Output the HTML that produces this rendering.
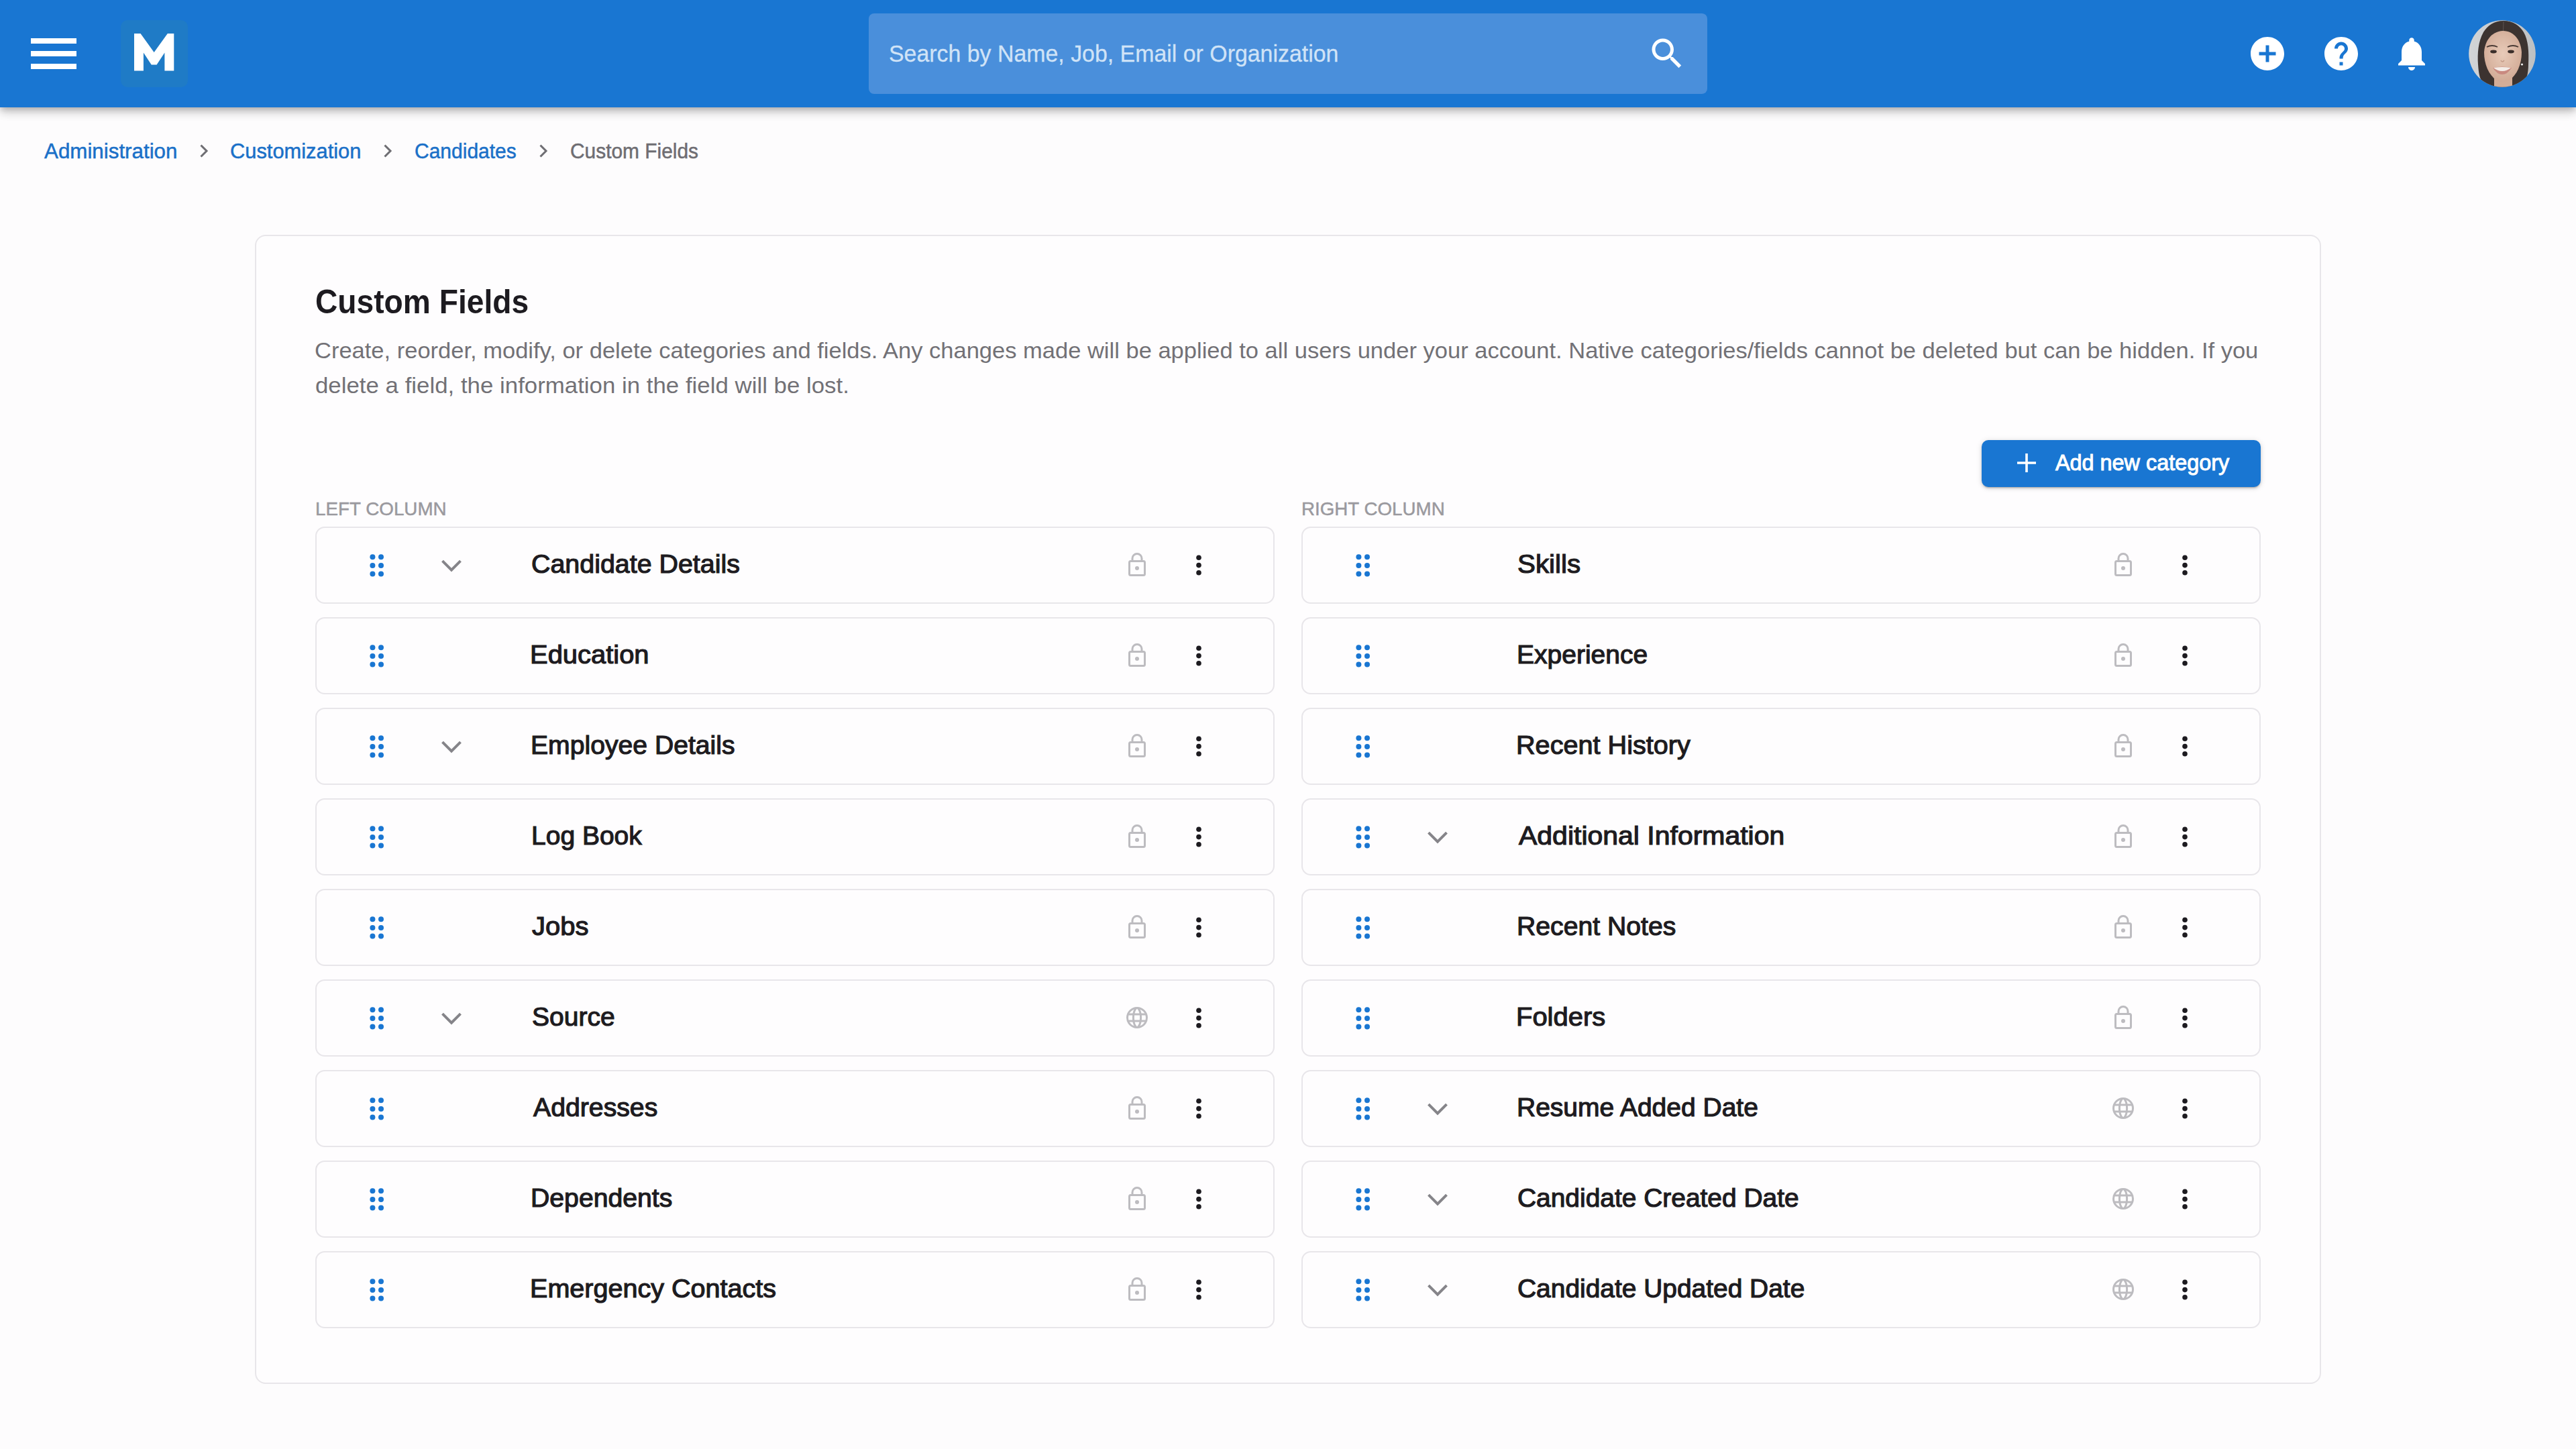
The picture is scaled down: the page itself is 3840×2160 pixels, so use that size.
<!DOCTYPE html>
<html><head><meta charset="utf-8"><style>
*{box-sizing:border-box;margin:0;padding:0}
html,body{width:3840px;height:2160px;overflow:hidden}
body{background:#fdfcfd;font-family:"Liberation Sans",sans-serif;position:relative}
.abs{position:absolute}
#hdr{position:absolute;left:0;top:0;width:3840px;height:160px;background:#1976d2;box-shadow:0 4px 8px -2px rgba(0,0,0,.16),0 8px 12px 0 rgba(0,0,0,.14),0 2px 20px 0 rgba(0,0,0,.12);z-index:2}
.bar{position:absolute;left:46px;width:68px;height:8px;background:#fff}
#logo{position:absolute;left:180px;top:30px;width:100px;height:100px;border-radius:10px;background:#1f7bc6}
#search{position:absolute;left:1295px;top:20px;width:1250px;height:120px;border-radius:8px;background:#4a8fdb}
.t{position:absolute;white-space:nowrap;line-height:1;transform-origin:0 0}
#card{position:absolute;left:380px;top:350px;width:3080px;height:1713px;border:2px solid #e8e6ea;border-radius:16px;background:#fefdfe}
.row{position:absolute;width:1430px;height:115px;border:2px solid #e8e6ea;border-radius:14px;background:#fefdfe}
svg{position:absolute;overflow:visible}
@media (max-width:1920px){html{zoom:0.5}}
</style></head><body>
<div id="hdr">
<div class="bar" style="top:57px"></div>
<div class="bar" style="top:76px"></div>
<div class="bar" style="top:95px"></div>
<div id="logo"></div>
<svg style="left:0;top:0" width="300" height="160" viewBox="0 0 300 160"><path fill="#fff" d="M200 105.4V50H209.5L229.65 78L249.8 50H259.3V105.4H245.4V78.5L233.6 96.6H225.7L213.9 78.5V105.4Z"/></svg>
<div id="search"></div>
<svg style="left:2455px;top:50px" width="60" height="60" viewBox="0 0 24 24"><path fill="#fff" d="M15.5 14h-.79l-.28-.27C15.41 12.59 16 11.11 16 9.5 16 5.91 13.09 3 9.5 3S3 5.91 3 9.5 5.91 16 9.5 16c1.61 0 3.09-.59 4.23-1.57l.27.28v.79l5 4.99L20.49 19l-4.99-5zm-6 0C7.01 14 5 11.99 5 9.5S7.01 5 9.5 5 14 7.01 14 9.5 11.99 14 9.5 14z"/></svg>
<svg style="left:3350px;top:50px" width="60" height="60" viewBox="0 0 24 24"><path fill="#fff" d="M12 2C6.48 2 2 6.48 2 12s4.48 10 10 10 10-4.48 10-10S17.52 2 12 2zm5 11h-4v4h-2v-4H7v-2h4V7h2v4h4v2z"/></svg>
<svg style="left:3460px;top:50px" width="60" height="60" viewBox="0 0 24 24"><path fill="#fff" d="M12 2C6.48 2 2 6.48 2 12s4.48 10 10 10 10-4.48 10-10S17.52 2 12 2zm1 17h-2v-2h2v2zm2.07-7.75l-.9.92C13.45 12.9 13 13.5 13 15h-2v-.5c0-1.1.45-2.1 1.170-2.83l1.24-1.26c.37-.36.59-.86.59-1.41 0-1.1-.9-2-2-2s-2 .9-2 2H8c0-2.21 1.79-4 4-4s4 1.79 4 4c0 .88-.36 1.68-.93 2.25z"/></svg>
<svg style="left:3565px;top:50px" width="60" height="60" viewBox="0 0 24 24"><path fill="#fff" d="M12 22c1.1 0 2-.9 2-2h-4c0 1.1.89 2 2 2zm6-6v-5c0-3.07-1.64-5.64-4.5-6.32V4c0-.83-.67-1.5-1.5-1.5s-1.5.67-1.5 1.5v.68C7.63 5.36 6 7.92 6 11v5l-2 2v1h16v-1l-2-2z"/></svg>
<svg style="left:3680px;top:30px" width="100" height="100" viewBox="0 0 100 100">
<defs><clipPath id="av"><circle cx="50" cy="50" r="49.8"/></clipPath>
<linearGradient id="avbg" x1="0" y1="0" x2="1" y2="0"><stop offset="0" stop-color="#d2d4d6"/><stop offset="1" stop-color="#bec0c2"/></linearGradient>
<radialGradient id="skin" cx="0.5" cy="0.45" r="0.6"><stop offset="0" stop-color="#e8cbb9"/><stop offset="1" stop-color="#d0a893"/></radialGradient></defs>
<g clip-path="url(#av)">
<rect width="100" height="100" fill="url(#avbg)"/>
<path d="M52 1C38 1 28 8 22 18C14 32 13 50 14 66C15 80 16 90 26 100H80C86 90 89 80 89 66C90 48 89 30 82 18C76 8 66 1 52 1Z" fill="#3c3330"/>
<rect x="38" y="84" width="27" height="18" fill="#d3ad98"/>
<path d="M51 16C33 17 24 32 23 48C23 66 30 82 42 90C47 93 55 93 60 90C72 82 79 66 79 48C78 32 69 16 51 16Z" fill="url(#skin)"/>
<path d="M52 2L51.5 16" stroke="#5e5552" stroke-width="1"/>
<path d="M27 40Q35 36 43 40" stroke="#4a3a34" stroke-width="1.8" fill="none"/>
<path d="M58 40Q66 36 74 40" stroke="#4a3a34" stroke-width="1.8" fill="none"/>
<ellipse cx="37" cy="47" rx="4.8" ry="2.4" fill="#3a2e2a"/>
<ellipse cx="63" cy="47" rx="4.8" ry="2.4" fill="#3a2e2a"/>
<path d="M48 60Q50 64 53 60" stroke="#c29a86" stroke-width="1.4" fill="none"/>
<path d="M36 71Q50 68 64 71Q58 81 50 81Q42 81 36 71Z" fill="#c98a80"/>
<path d="M37 71Q50 69 63 71Q57 76 50 76Q43 76 37 71Z" fill="#f4ede8"/>
<circle cx="79.5" cy="66" r="1.6" fill="#eee"/>
</g></svg>
<div class="t" id="tx_search" style="left:1325.06px;top:62.37px;font-size:35px;color:#d0e3f7;font-weight:400;-webkit-text-stroke:0.3px #d0e3f7;transform:scaleX(0.96803);">Search by Name, Job, Email or Organization</div>
</div>
<div class="t" id="tx_bc1" style="left:65.60px;top:210.26px;font-size:31px;color:#1a70c8;font-weight:400;-webkit-text-stroke:0.5px #1a70c8;transform:scaleX(1.01033);">Administration</div>
<div class="t" id="tx_bc2" style="left:342.60px;top:210.26px;font-size:31px;color:#1a70c8;font-weight:400;-webkit-text-stroke:0.5px #1a70c8;transform:scaleX(0.99486);">Customization</div>
<div class="t" id="tx_bc3" style="left:617.74px;top:210.26px;font-size:31px;color:#1a70c8;font-weight:400;-webkit-text-stroke:0.5px #1a70c8;transform:scaleX(0.96779);">Candidates</div>
<div class="t" id="tx_bc4" style="left:850.36px;top:210.26px;font-size:31px;color:#6e6d72;font-weight:400;-webkit-text-stroke:0.5px #6e6d72;transform:scaleX(0.96431);">Custom Fields</div>
<svg style="left:297.5px;top:215px" width="12" height="20" viewBox="0 0 12 20"><path d="M1.5 1.5L10 10L1.5 18.5" fill="none" stroke="#6e6d72" stroke-width="3"/></svg>
<svg style="left:572px;top:215px" width="12" height="20" viewBox="0 0 12 20"><path d="M1.5 1.5L10 10L1.5 18.5" fill="none" stroke="#6e6d72" stroke-width="3"/></svg>
<svg style="left:804px;top:215px" width="12" height="20" viewBox="0 0 12 20"><path d="M1.5 1.5L10 10L1.5 18.5" fill="none" stroke="#6e6d72" stroke-width="3"/></svg>
<div id="card"></div>
<div class="t" id="tx_title" style="left:470.06px;top:424.98px;font-size:50px;color:#1d1b20;font-weight:700;transform:scaleX(0.92354);">Custom Fields</div>
<div class="t" id="tx_desc1" style="left:468.97px;top:505.22px;font-size:34px;color:#727176;font-weight:400;transform:scaleX(1.01473);">Create, reorder, modify, or delete categories and fields. Any changes made will be applied to all users under your account. Native categories/fields cannot be deleted but can be hidden. If you</div>
<div class="t" id="tx_desc2" style="left:469.98px;top:557.22px;font-size:34px;color:#727176;font-weight:400;transform:scaleX(1.02458);">delete a field, the information in the field will be lost.</div>
<div class="abs" style="left:2954px;top:656px;width:416px;height:70px;border-radius:10px;background:#1976d2;box-shadow:0 3px 2px -2px rgba(0,0,0,.2),0 2px 4px 0 rgba(0,0,0,.14),0 1px 10px 0 rgba(0,0,0,.12)"></div>
<svg style="left:3007px;top:676px" width="28" height="28" viewBox="0 0 28 28"><path d="M14 0V28M0 14H28" stroke="#fff" stroke-width="3.6"/></svg>
<div class="t" id="tx_btn" style="left:3064.00px;top:673.07px;font-size:33px;color:#ffffff;font-weight:400;-webkit-text-stroke:1.0px #ffffff;transform:scaleX(0.98115);">Add new category</div>
<div class="t" id="tx_lcol" style="left:469.52px;top:743.67px;font-size:28.5px;color:#9a999e;font-weight:400;-webkit-text-stroke:0.5px #9a999e;transform:scaleX(0.97547);">LEFT COLUMN</div>
<div class="t" id="tx_rcol" style="left:1940.05px;top:743.67px;font-size:28.5px;color:#9a999e;font-weight:400;-webkit-text-stroke:0.5px #9a999e;transform:scaleX(0.97308);">RIGHT COLUMN</div>
<div class="row" style="left:470px;top:785px"></div>
<svg style="left:470px;top:785px" width="1" height="1"><g fill="#1976d2"><circle cx="85.4" cy="45.3" r="4"/><circle cx="85.4" cy="57.9" r="4"/><circle cx="85.4" cy="70.5" r="4"/><circle cx="98" cy="45.3" r="4"/><circle cx="98" cy="57.9" r="4"/><circle cx="98" cy="70.5" r="4"/></g></svg>
<svg style="left:470px;top:785px" width="1" height="1"><path d="M189.5 51.2L203 64.7L216.5 51.2" fill="none" stroke="#858489" stroke-width="4"/></svg>
<div class="t" id="tx_L0" style="left:792.49px;top:820.79px;font-size:39px;color:#1d1b20;font-weight:400;-webkit-text-stroke:1.2px #1d1b20;transform:scaleX(1.00980);">Candidate Details</div>
<svg style="left:1695px;top:785px" width="1" height="1"><g fill="none" stroke="#bdbcc0" stroke-width="3"><rect x="-11.5" y="51.5" width="23" height="21" rx="2"/><path d="M-7 51.5V47.5a7 7 0 0 1 14 0V51.5"/></g><circle cx="0" cy="62" r="3" fill="#bdbcc0"/></svg>
<svg style="left:1787px;top:785px" width="1" height="1"><g fill="#1d1b20"><circle cx="0" cy="46.2" r="3.8"/><circle cx="0" cy="57.6" r="3.8"/><circle cx="0" cy="68.8" r="3.8"/></g></svg>
<div class="row" style="left:470px;top:920px"></div>
<svg style="left:470px;top:920px" width="1" height="1"><g fill="#1976d2"><circle cx="85.4" cy="45.3" r="4"/><circle cx="85.4" cy="57.9" r="4"/><circle cx="85.4" cy="70.5" r="4"/><circle cx="98" cy="45.3" r="4"/><circle cx="98" cy="57.9" r="4"/><circle cx="98" cy="70.5" r="4"/></g></svg>
<div class="t" id="tx_L1" style="left:790.44px;top:955.79px;font-size:39px;color:#1d1b20;font-weight:400;-webkit-text-stroke:1.2px #1d1b20;transform:scaleX(1.02372);">Education</div>
<svg style="left:1695px;top:920px" width="1" height="1"><g fill="none" stroke="#bdbcc0" stroke-width="3"><rect x="-11.5" y="51.5" width="23" height="21" rx="2"/><path d="M-7 51.5V47.5a7 7 0 0 1 14 0V51.5"/></g><circle cx="0" cy="62" r="3" fill="#bdbcc0"/></svg>
<svg style="left:1787px;top:920px" width="1" height="1"><g fill="#1d1b20"><circle cx="0" cy="46.2" r="3.8"/><circle cx="0" cy="57.6" r="3.8"/><circle cx="0" cy="68.8" r="3.8"/></g></svg>
<div class="row" style="left:470px;top:1055px"></div>
<svg style="left:470px;top:1055px" width="1" height="1"><g fill="#1976d2"><circle cx="85.4" cy="45.3" r="4"/><circle cx="85.4" cy="57.9" r="4"/><circle cx="85.4" cy="70.5" r="4"/><circle cx="98" cy="45.3" r="4"/><circle cx="98" cy="57.9" r="4"/><circle cx="98" cy="70.5" r="4"/></g></svg>
<svg style="left:470px;top:1055px" width="1" height="1"><path d="M189.5 51.2L203 64.7L216.5 51.2" fill="none" stroke="#858489" stroke-width="4"/></svg>
<div class="t" id="tx_L2" style="left:791.49px;top:1090.79px;font-size:39px;color:#1d1b20;font-weight:400;-webkit-text-stroke:1.2px #1d1b20;transform:scaleX(1.00335);">Employee Details</div>
<svg style="left:1695px;top:1055px" width="1" height="1"><g fill="none" stroke="#bdbcc0" stroke-width="3"><rect x="-11.5" y="51.5" width="23" height="21" rx="2"/><path d="M-7 51.5V47.5a7 7 0 0 1 14 0V51.5"/></g><circle cx="0" cy="62" r="3" fill="#bdbcc0"/></svg>
<svg style="left:1787px;top:1055px" width="1" height="1"><g fill="#1d1b20"><circle cx="0" cy="46.2" r="3.8"/><circle cx="0" cy="57.6" r="3.8"/><circle cx="0" cy="68.8" r="3.8"/></g></svg>
<div class="row" style="left:470px;top:1190px"></div>
<svg style="left:470px;top:1190px" width="1" height="1"><g fill="#1976d2"><circle cx="85.4" cy="45.3" r="4"/><circle cx="85.4" cy="57.9" r="4"/><circle cx="85.4" cy="70.5" r="4"/><circle cx="98" cy="45.3" r="4"/><circle cx="98" cy="57.9" r="4"/><circle cx="98" cy="70.5" r="4"/></g></svg>
<div class="t" id="tx_L3" style="left:791.50px;top:1225.79px;font-size:39px;color:#1d1b20;font-weight:400;-webkit-text-stroke:1.2px #1d1b20;transform:scaleX(1.00002);">Log Book</div>
<svg style="left:1695px;top:1190px" width="1" height="1"><g fill="none" stroke="#bdbcc0" stroke-width="3"><rect x="-11.5" y="51.5" width="23" height="21" rx="2"/><path d="M-7 51.5V47.5a7 7 0 0 1 14 0V51.5"/></g><circle cx="0" cy="62" r="3" fill="#bdbcc0"/></svg>
<svg style="left:1787px;top:1190px" width="1" height="1"><g fill="#1d1b20"><circle cx="0" cy="46.2" r="3.8"/><circle cx="0" cy="57.6" r="3.8"/><circle cx="0" cy="68.8" r="3.8"/></g></svg>
<div class="row" style="left:470px;top:1325px"></div>
<svg style="left:470px;top:1325px" width="1" height="1"><g fill="#1976d2"><circle cx="85.4" cy="45.3" r="4"/><circle cx="85.4" cy="57.9" r="4"/><circle cx="85.4" cy="70.5" r="4"/><circle cx="98" cy="45.3" r="4"/><circle cx="98" cy="57.9" r="4"/><circle cx="98" cy="70.5" r="4"/></g></svg>
<div class="t" id="tx_L4" style="left:793.48px;top:1360.79px;font-size:39px;color:#1d1b20;font-weight:400;-webkit-text-stroke:1.2px #1d1b20;transform:scaleX(1.02495);">Jobs</div>
<svg style="left:1695px;top:1325px" width="1" height="1"><g fill="none" stroke="#bdbcc0" stroke-width="3"><rect x="-11.5" y="51.5" width="23" height="21" rx="2"/><path d="M-7 51.5V47.5a7 7 0 0 1 14 0V51.5"/></g><circle cx="0" cy="62" r="3" fill="#bdbcc0"/></svg>
<svg style="left:1787px;top:1325px" width="1" height="1"><g fill="#1d1b20"><circle cx="0" cy="46.2" r="3.8"/><circle cx="0" cy="57.6" r="3.8"/><circle cx="0" cy="68.8" r="3.8"/></g></svg>
<div class="row" style="left:470px;top:1460px"></div>
<svg style="left:470px;top:1460px" width="1" height="1"><g fill="#1976d2"><circle cx="85.4" cy="45.3" r="4"/><circle cx="85.4" cy="57.9" r="4"/><circle cx="85.4" cy="70.5" r="4"/><circle cx="98" cy="45.3" r="4"/><circle cx="98" cy="57.9" r="4"/><circle cx="98" cy="70.5" r="4"/></g></svg>
<svg style="left:470px;top:1460px" width="1" height="1"><path d="M189.5 51.2L203 64.7L216.5 51.2" fill="none" stroke="#858489" stroke-width="4"/></svg>
<div class="t" id="tx_L5" style="left:792.51px;top:1495.79px;font-size:39px;color:#1d1b20;font-weight:400;-webkit-text-stroke:1.2px #1d1b20;transform:scaleX(1.00008);">Source</div>
<svg style="left:1695px;top:1460px" width="1" height="1"><g fill="none" stroke="#bdbcc0" stroke-width="3"><circle cx="0" cy="57" r="14.5"/><path d="M-13 52H13M-13 62H13"/><path d="M-1.5 43C-7 49 -7 65 -1.5 71M1.5 43C7 49 7 65 1.5 71"/></g></svg>
<svg style="left:1787px;top:1460px" width="1" height="1"><g fill="#1d1b20"><circle cx="0" cy="46.2" r="3.8"/><circle cx="0" cy="57.6" r="3.8"/><circle cx="0" cy="68.8" r="3.8"/></g></svg>
<div class="row" style="left:470px;top:1595px"></div>
<svg style="left:470px;top:1595px" width="1" height="1"><g fill="#1976d2"><circle cx="85.4" cy="45.3" r="4"/><circle cx="85.4" cy="57.9" r="4"/><circle cx="85.4" cy="70.5" r="4"/><circle cx="98" cy="45.3" r="4"/><circle cx="98" cy="57.9" r="4"/><circle cx="98" cy="70.5" r="4"/></g></svg>
<div class="t" id="tx_L6" style="left:794.50px;top:1630.79px;font-size:39px;color:#1d1b20;font-weight:400;-webkit-text-stroke:1.2px #1d1b20;transform:scaleX(1.00546);">Addresses</div>
<svg style="left:1695px;top:1595px" width="1" height="1"><g fill="none" stroke="#bdbcc0" stroke-width="3"><rect x="-11.5" y="51.5" width="23" height="21" rx="2"/><path d="M-7 51.5V47.5a7 7 0 0 1 14 0V51.5"/></g><circle cx="0" cy="62" r="3" fill="#bdbcc0"/></svg>
<svg style="left:1787px;top:1595px" width="1" height="1"><g fill="#1d1b20"><circle cx="0" cy="46.2" r="3.8"/><circle cx="0" cy="57.6" r="3.8"/><circle cx="0" cy="68.8" r="3.8"/></g></svg>
<div class="row" style="left:470px;top:1730px"></div>
<svg style="left:470px;top:1730px" width="1" height="1"><g fill="#1976d2"><circle cx="85.4" cy="45.3" r="4"/><circle cx="85.4" cy="57.9" r="4"/><circle cx="85.4" cy="70.5" r="4"/><circle cx="98" cy="45.3" r="4"/><circle cx="98" cy="57.9" r="4"/><circle cx="98" cy="70.5" r="4"/></g></svg>
<div class="t" id="tx_L7" style="left:791.49px;top:1765.79px;font-size:39px;color:#1d1b20;font-weight:400;-webkit-text-stroke:1.2px #1d1b20;transform:scaleX(1.00486);">Dependents</div>
<svg style="left:1695px;top:1730px" width="1" height="1"><g fill="none" stroke="#bdbcc0" stroke-width="3"><rect x="-11.5" y="51.5" width="23" height="21" rx="2"/><path d="M-7 51.5V47.5a7 7 0 0 1 14 0V51.5"/></g><circle cx="0" cy="62" r="3" fill="#bdbcc0"/></svg>
<svg style="left:1787px;top:1730px" width="1" height="1"><g fill="#1d1b20"><circle cx="0" cy="46.2" r="3.8"/><circle cx="0" cy="57.6" r="3.8"/><circle cx="0" cy="68.8" r="3.8"/></g></svg>
<div class="row" style="left:470px;top:1865px"></div>
<svg style="left:470px;top:1865px" width="1" height="1"><g fill="#1976d2"><circle cx="85.4" cy="45.3" r="4"/><circle cx="85.4" cy="57.9" r="4"/><circle cx="85.4" cy="70.5" r="4"/><circle cx="98" cy="45.3" r="4"/><circle cx="98" cy="57.9" r="4"/><circle cx="98" cy="70.5" r="4"/></g></svg>
<div class="t" id="tx_L8" style="left:790.46px;top:1900.79px;font-size:39px;color:#1d1b20;font-weight:400;-webkit-text-stroke:1.2px #1d1b20;transform:scaleX(1.01393);">Emergency Contacts</div>
<svg style="left:1695px;top:1865px" width="1" height="1"><g fill="none" stroke="#bdbcc0" stroke-width="3"><rect x="-11.5" y="51.5" width="23" height="21" rx="2"/><path d="M-7 51.5V47.5a7 7 0 0 1 14 0V51.5"/></g><circle cx="0" cy="62" r="3" fill="#bdbcc0"/></svg>
<svg style="left:1787px;top:1865px" width="1" height="1"><g fill="#1d1b20"><circle cx="0" cy="46.2" r="3.8"/><circle cx="0" cy="57.6" r="3.8"/><circle cx="0" cy="68.8" r="3.8"/></g></svg>
<div class="row" style="left:1940px;top:785px"></div>
<svg style="left:1940px;top:785px" width="1" height="1"><g fill="#1976d2"><circle cx="85.4" cy="45.3" r="4"/><circle cx="85.4" cy="57.9" r="4"/><circle cx="85.4" cy="70.5" r="4"/><circle cx="98" cy="45.3" r="4"/><circle cx="98" cy="57.9" r="4"/><circle cx="98" cy="70.5" r="4"/></g></svg>
<div class="t" id="tx_R0" style="left:2261.97px;top:820.79px;font-size:39px;color:#1d1b20;font-weight:400;-webkit-text-stroke:1.2px #1d1b20;transform:scaleX(1.03385);">Skills</div>
<svg style="left:3165px;top:785px" width="1" height="1"><g fill="none" stroke="#bdbcc0" stroke-width="3"><rect x="-11.5" y="51.5" width="23" height="21" rx="2"/><path d="M-7 51.5V47.5a7 7 0 0 1 14 0V51.5"/></g><circle cx="0" cy="62" r="3" fill="#bdbcc0"/></svg>
<svg style="left:3257px;top:785px" width="1" height="1"><g fill="#1d1b20"><circle cx="0" cy="46.2" r="3.8"/><circle cx="0" cy="57.6" r="3.8"/><circle cx="0" cy="68.8" r="3.8"/></g></svg>
<div class="row" style="left:1940px;top:920px"></div>
<svg style="left:1940px;top:920px" width="1" height="1"><g fill="#1976d2"><circle cx="85.4" cy="45.3" r="4"/><circle cx="85.4" cy="57.9" r="4"/><circle cx="85.4" cy="70.5" r="4"/><circle cx="98" cy="45.3" r="4"/><circle cx="98" cy="57.9" r="4"/><circle cx="98" cy="70.5" r="4"/></g></svg>
<div class="t" id="tx_R1" style="left:2261.00px;top:955.79px;font-size:39px;color:#1d1b20;font-weight:400;-webkit-text-stroke:1.2px #1d1b20;transform:scaleX(1.00003);">Experience</div>
<svg style="left:3165px;top:920px" width="1" height="1"><g fill="none" stroke="#bdbcc0" stroke-width="3"><rect x="-11.5" y="51.5" width="23" height="21" rx="2"/><path d="M-7 51.5V47.5a7 7 0 0 1 14 0V51.5"/></g><circle cx="0" cy="62" r="3" fill="#bdbcc0"/></svg>
<svg style="left:3257px;top:920px" width="1" height="1"><g fill="#1d1b20"><circle cx="0" cy="46.2" r="3.8"/><circle cx="0" cy="57.6" r="3.8"/><circle cx="0" cy="68.8" r="3.8"/></g></svg>
<div class="row" style="left:1940px;top:1055px"></div>
<svg style="left:1940px;top:1055px" width="1" height="1"><g fill="#1976d2"><circle cx="85.4" cy="45.3" r="4"/><circle cx="85.4" cy="57.9" r="4"/><circle cx="85.4" cy="70.5" r="4"/><circle cx="98" cy="45.3" r="4"/><circle cx="98" cy="57.9" r="4"/><circle cx="98" cy="70.5" r="4"/></g></svg>
<div class="t" id="tx_R2" style="left:2259.97px;top:1090.79px;font-size:39px;color:#1d1b20;font-weight:400;-webkit-text-stroke:1.2px #1d1b20;transform:scaleX(1.01576);">Recent History</div>
<svg style="left:3165px;top:1055px" width="1" height="1"><g fill="none" stroke="#bdbcc0" stroke-width="3"><rect x="-11.5" y="51.5" width="23" height="21" rx="2"/><path d="M-7 51.5V47.5a7 7 0 0 1 14 0V51.5"/></g><circle cx="0" cy="62" r="3" fill="#bdbcc0"/></svg>
<svg style="left:3257px;top:1055px" width="1" height="1"><g fill="#1d1b20"><circle cx="0" cy="46.2" r="3.8"/><circle cx="0" cy="57.6" r="3.8"/><circle cx="0" cy="68.8" r="3.8"/></g></svg>
<div class="row" style="left:1940px;top:1190px"></div>
<svg style="left:1940px;top:1190px" width="1" height="1"><g fill="#1976d2"><circle cx="85.4" cy="45.3" r="4"/><circle cx="85.4" cy="57.9" r="4"/><circle cx="85.4" cy="70.5" r="4"/><circle cx="98" cy="45.3" r="4"/><circle cx="98" cy="57.9" r="4"/><circle cx="98" cy="70.5" r="4"/></g></svg>
<svg style="left:1940px;top:1190px" width="1" height="1"><path d="M189.5 51.2L203 64.7L216.5 51.2" fill="none" stroke="#858489" stroke-width="4"/></svg>
<div class="t" id="tx_R3" style="left:2264.05px;top:1225.79px;font-size:39px;color:#1d1b20;font-weight:400;-webkit-text-stroke:1.2px #1d1b20;transform:scaleX(1.05054);">Additional Information</div>
<svg style="left:3165px;top:1190px" width="1" height="1"><g fill="none" stroke="#bdbcc0" stroke-width="3"><rect x="-11.5" y="51.5" width="23" height="21" rx="2"/><path d="M-7 51.5V47.5a7 7 0 0 1 14 0V51.5"/></g><circle cx="0" cy="62" r="3" fill="#bdbcc0"/></svg>
<svg style="left:3257px;top:1190px" width="1" height="1"><g fill="#1d1b20"><circle cx="0" cy="46.2" r="3.8"/><circle cx="0" cy="57.6" r="3.8"/><circle cx="0" cy="68.8" r="3.8"/></g></svg>
<div class="row" style="left:1940px;top:1325px"></div>
<svg style="left:1940px;top:1325px" width="1" height="1"><g fill="#1976d2"><circle cx="85.4" cy="45.3" r="4"/><circle cx="85.4" cy="57.9" r="4"/><circle cx="85.4" cy="70.5" r="4"/><circle cx="98" cy="45.3" r="4"/><circle cx="98" cy="57.9" r="4"/><circle cx="98" cy="70.5" r="4"/></g></svg>
<div class="t" id="tx_R4" style="left:2260.99px;top:1360.79px;font-size:39px;color:#1d1b20;font-weight:400;-webkit-text-stroke:1.2px #1d1b20;transform:scaleX(1.00427);">Recent Notes</div>
<svg style="left:3165px;top:1325px" width="1" height="1"><g fill="none" stroke="#bdbcc0" stroke-width="3"><rect x="-11.5" y="51.5" width="23" height="21" rx="2"/><path d="M-7 51.5V47.5a7 7 0 0 1 14 0V51.5"/></g><circle cx="0" cy="62" r="3" fill="#bdbcc0"/></svg>
<svg style="left:3257px;top:1325px" width="1" height="1"><g fill="#1d1b20"><circle cx="0" cy="46.2" r="3.8"/><circle cx="0" cy="57.6" r="3.8"/><circle cx="0" cy="68.8" r="3.8"/></g></svg>
<div class="row" style="left:1940px;top:1460px"></div>
<svg style="left:1940px;top:1460px" width="1" height="1"><g fill="#1976d2"><circle cx="85.4" cy="45.3" r="4"/><circle cx="85.4" cy="57.9" r="4"/><circle cx="85.4" cy="70.5" r="4"/><circle cx="98" cy="45.3" r="4"/><circle cx="98" cy="57.9" r="4"/><circle cx="98" cy="70.5" r="4"/></g></svg>
<div class="t" id="tx_R5" style="left:2259.94px;top:1495.79px;font-size:39px;color:#1d1b20;font-weight:400;-webkit-text-stroke:1.2px #1d1b20;transform:scaleX(1.02393);">Folders</div>
<svg style="left:3165px;top:1460px" width="1" height="1"><g fill="none" stroke="#bdbcc0" stroke-width="3"><rect x="-11.5" y="51.5" width="23" height="21" rx="2"/><path d="M-7 51.5V47.5a7 7 0 0 1 14 0V51.5"/></g><circle cx="0" cy="62" r="3" fill="#bdbcc0"/></svg>
<svg style="left:3257px;top:1460px" width="1" height="1"><g fill="#1d1b20"><circle cx="0" cy="46.2" r="3.8"/><circle cx="0" cy="57.6" r="3.8"/><circle cx="0" cy="68.8" r="3.8"/></g></svg>
<div class="row" style="left:1940px;top:1595px"></div>
<svg style="left:1940px;top:1595px" width="1" height="1"><g fill="#1976d2"><circle cx="85.4" cy="45.3" r="4"/><circle cx="85.4" cy="57.9" r="4"/><circle cx="85.4" cy="70.5" r="4"/><circle cx="98" cy="45.3" r="4"/><circle cx="98" cy="57.9" r="4"/><circle cx="98" cy="70.5" r="4"/></g></svg>
<svg style="left:1940px;top:1595px" width="1" height="1"><path d="M189.5 51.2L203 64.7L216.5 51.2" fill="none" stroke="#858489" stroke-width="4"/></svg>
<div class="t" id="tx_R6" style="left:2261.00px;top:1630.79px;font-size:39px;color:#1d1b20;font-weight:400;-webkit-text-stroke:1.2px #1d1b20;transform:scaleX(1.00001);">Resume Added Date</div>
<svg style="left:3165px;top:1595px" width="1" height="1"><g fill="none" stroke="#bdbcc0" stroke-width="3"><circle cx="0" cy="57" r="14.5"/><path d="M-13 52H13M-13 62H13"/><path d="M-1.5 43C-7 49 -7 65 -1.5 71M1.5 43C7 49 7 65 1.5 71"/></g></svg>
<svg style="left:3257px;top:1595px" width="1" height="1"><g fill="#1d1b20"><circle cx="0" cy="46.2" r="3.8"/><circle cx="0" cy="57.6" r="3.8"/><circle cx="0" cy="68.8" r="3.8"/></g></svg>
<div class="row" style="left:1940px;top:1730px"></div>
<svg style="left:1940px;top:1730px" width="1" height="1"><g fill="#1976d2"><circle cx="85.4" cy="45.3" r="4"/><circle cx="85.4" cy="57.9" r="4"/><circle cx="85.4" cy="70.5" r="4"/><circle cx="98" cy="45.3" r="4"/><circle cx="98" cy="57.9" r="4"/><circle cx="98" cy="70.5" r="4"/></g></svg>
<svg style="left:1940px;top:1730px" width="1" height="1"><path d="M189.5 51.2L203 64.7L216.5 51.2" fill="none" stroke="#858489" stroke-width="4"/></svg>
<div class="t" id="tx_R7" style="left:2262.00px;top:1765.79px;font-size:39px;color:#1d1b20;font-weight:400;-webkit-text-stroke:1.2px #1d1b20;transform:scaleX(0.99762);">Candidate Created Date</div>
<svg style="left:3165px;top:1730px" width="1" height="1"><g fill="none" stroke="#bdbcc0" stroke-width="3"><circle cx="0" cy="57" r="14.5"/><path d="M-13 52H13M-13 62H13"/><path d="M-1.5 43C-7 49 -7 65 -1.5 71M1.5 43C7 49 7 65 1.5 71"/></g></svg>
<svg style="left:3257px;top:1730px" width="1" height="1"><g fill="#1d1b20"><circle cx="0" cy="46.2" r="3.8"/><circle cx="0" cy="57.6" r="3.8"/><circle cx="0" cy="68.8" r="3.8"/></g></svg>
<div class="row" style="left:1940px;top:1865px"></div>
<svg style="left:1940px;top:1865px" width="1" height="1"><g fill="#1976d2"><circle cx="85.4" cy="45.3" r="4"/><circle cx="85.4" cy="57.9" r="4"/><circle cx="85.4" cy="70.5" r="4"/><circle cx="98" cy="45.3" r="4"/><circle cx="98" cy="57.9" r="4"/><circle cx="98" cy="70.5" r="4"/></g></svg>
<svg style="left:1940px;top:1865px" width="1" height="1"><path d="M189.5 51.2L203 64.7L216.5 51.2" fill="none" stroke="#858489" stroke-width="4"/></svg>
<div class="t" id="tx_R8" style="left:2262.00px;top:1900.79px;font-size:39px;color:#1d1b20;font-weight:400;-webkit-text-stroke:1.2px #1d1b20;transform:scaleX(0.99766);">Candidate Updated Date</div>
<svg style="left:3165px;top:1865px" width="1" height="1"><g fill="none" stroke="#bdbcc0" stroke-width="3"><circle cx="0" cy="57" r="14.5"/><path d="M-13 52H13M-13 62H13"/><path d="M-1.5 43C-7 49 -7 65 -1.5 71M1.5 43C7 49 7 65 1.5 71"/></g></svg>
<svg style="left:3257px;top:1865px" width="1" height="1"><g fill="#1d1b20"><circle cx="0" cy="46.2" r="3.8"/><circle cx="0" cy="57.6" r="3.8"/><circle cx="0" cy="68.8" r="3.8"/></g></svg>
</body></html>
